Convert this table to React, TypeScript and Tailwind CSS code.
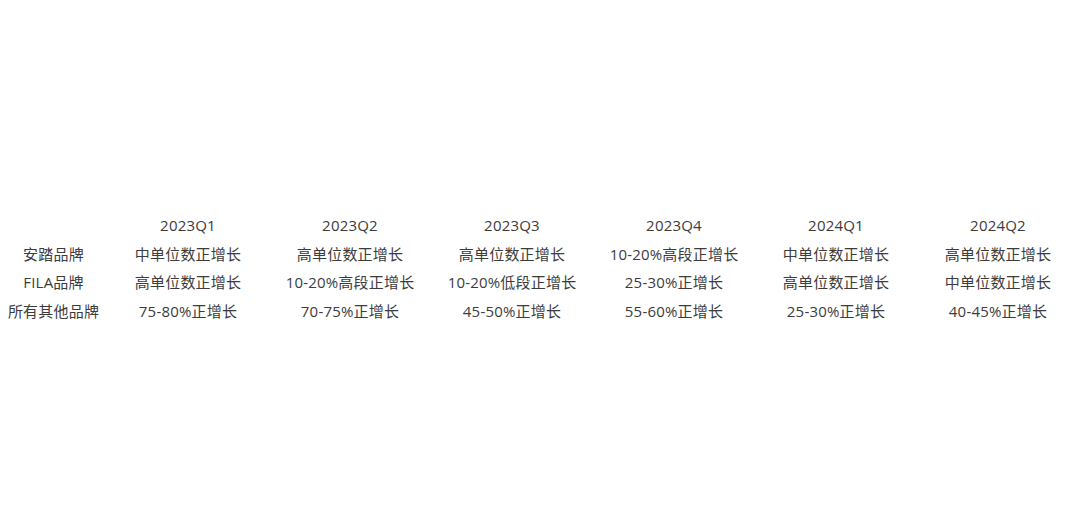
const quarters = ['2023Q1', '2023Q2', '2023Q3', '2023Q4', '2024Q1', '2024Q2'];

const rows: { brand: string; values: string[] }[] = [
  {
    brand: '安踏品牌',
    values: ['中单位数正增长', '高单位数正增长', '高单位数正增长', '10-20%高段正增长', '中单位数正增长', '高单位数正增长'],
  },
  {
    brand: 'FILA品牌',
    values: ['高单位数正增长', '10-20%高段正增长', '10-20%低段正增长', '25-30%正增长', '高单位数正增长', '中单位数正增长'],
  },
  {
    brand: '所有其他品牌',
    values: ['75-80%正增长', '70-75%正增长', '45-50%正增长', '55-60%正增长', '25-30%正增长', '40-45%正增长'],
  },
];

export default function App() {
  return (
    <div
      className="w-[1080px] h-[510px] bg-white pt-[211px] text-[15px] tracking-[0.2px] text-[#3c3c3c]"
      style={{ fontFamily: '"Open Sans", "Noto Sans CJK SC", sans-serif' }}
    >
      <div className="grid grid-cols-[107px_repeat(6,162px)]">
        <div className="h-[28.7px]" />
        {quarters.map((q) => (
          <div key={q} className="h-[28.7px] flex items-center justify-center">
            {q}
          </div>
        ))}
        {rows.map((row) => (
          <Row key={row.brand} brand={row.brand} values={row.values} />
        ))}
      </div>
    </div>
  );
}

function Row({ brand, values }: { brand: string; values: string[] }) {
  return (
    <>
      <div className="h-[28.7px] flex items-center justify-center whitespace-nowrap">{brand}</div>
      {values.map((v, i) => (
        <div key={i} className="h-[28.7px] flex items-center justify-center whitespace-nowrap">
          {v}
        </div>
      ))}
    </>
  );
}
